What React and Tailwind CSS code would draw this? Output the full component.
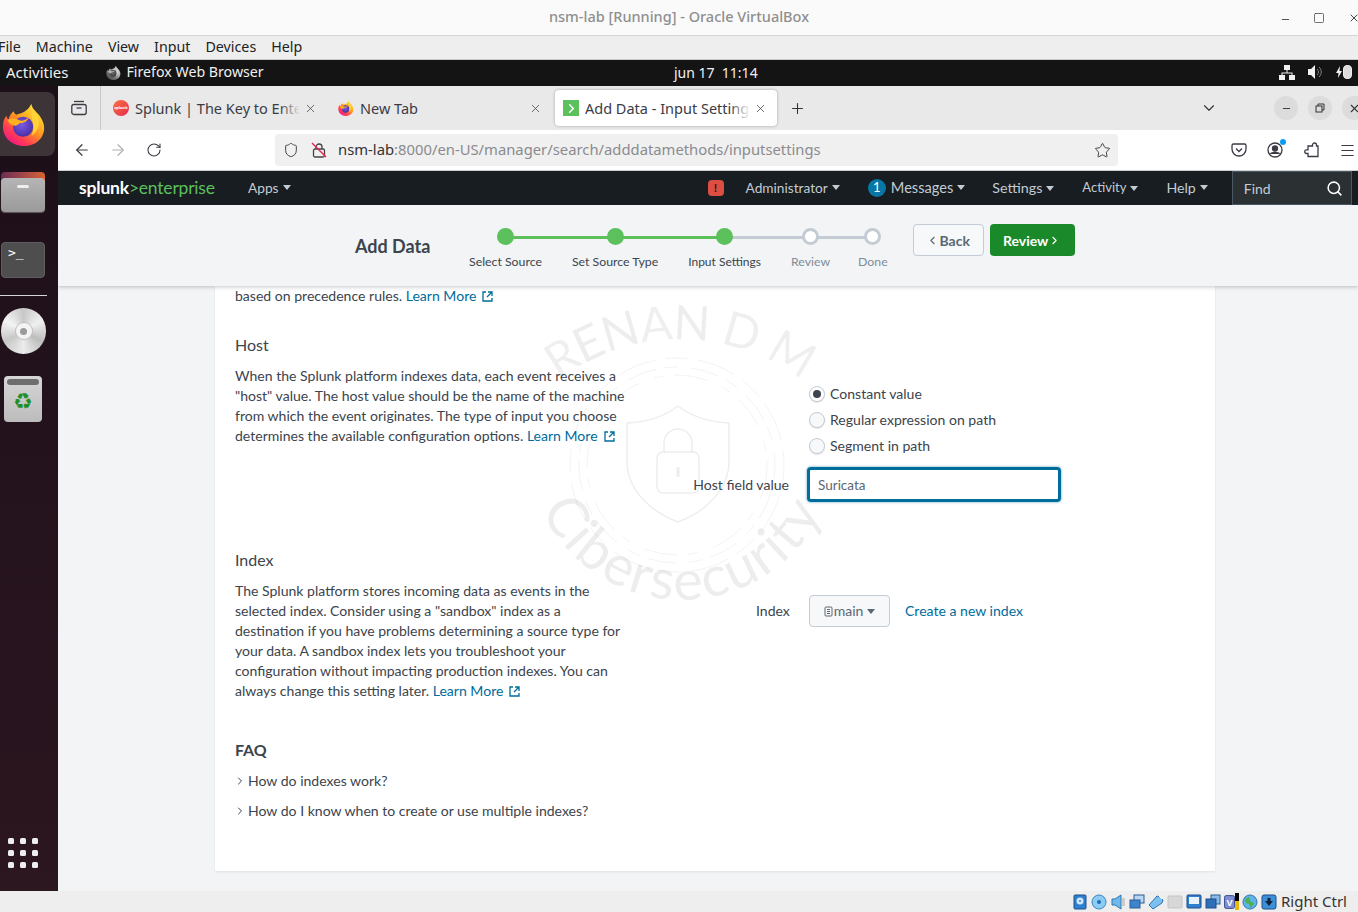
import { ChevronDown, ChevronRight, ChevronLeft, X, Plus, ArrowLeft, ArrowRight, RotateCw, Star, Search, Menu, Minus, Square, Shield } from "lucide-react";

const Caret = ({ className = "" }) => (
  <svg width="8" height="5" viewBox="0 0 8 5" className={className}>
    <path d="M0 0h8L4 5z" fill="currentColor" />
  </svg>
);

const FirefoxLogo = ({ id, size = 16 }) => (
  <svg width={size} height={size} viewBox="0 0 48 48">
    <defs>
      <linearGradient id={`${id}a`} x1="0.8" y1="0.1" x2="0.15" y2="0.95">
        <stop offset="0" stopColor="#ffe033" />
        <stop offset="0.4" stopColor="#ff9a1f" />
        <stop offset="0.75" stopColor="#ff3a55" />
        <stop offset="1" stopColor="#f0148c" />
      </linearGradient>
      <radialGradient id={`${id}b`} cx="0.45" cy="0.4" r="0.6">
        <stop offset="0" stopColor="#7a5be0" />
        <stop offset="1" stopColor="#4a2fa8" />
      </radialGradient>
    </defs>
    <path d="M32 2c1 6 5 8 9 13 3 4 5 9 5 13 0 12-10 20-22 20C11 48 1 39 1 27c0-5 1-9 4-12 0 2 1 3 2 4 1-4 3-7 6-9 0 2 1 3 3 4 5-2 12-3 16-12z" fill={`url(#${id}a)`} />
    <circle cx="23" cy="27" r="11" fill={`url(#${id}b)`} />
    <path d="M6 20c4-3 9-2 13 0 3 1 7 0 10-3-1 4-5 6-9 6-1 0-2 2-5 3-3 0-7-2-9-6z" fill="#ffb01f" />
    <path d="M33 8c5 3 8 10 7 17-1 6-5 10-8 12 3-6 3-12 1-17-1-4-1-8 0-12z" fill="#ffd23a" />
  </svg>
);

const WinFrameButton = ({ children }) => (
  <div className="flex h-6 w-6 shrink-0 items-center justify-center rounded-full bg-[#dcdcdc] text-[#333]">{children}</div>
);

const Tab = ({ icon, title, active, width, fade }) => (
  <div className={`flex h-9 shrink-0 items-center rounded pl-2 ${width} ${active ? "bg-white pr-[10px] shadow-[0_0_3px_rgba(0,0,0,0.3)]" : "pr-[12px]"}`}>
    <div className="flex h-4 w-4 shrink-0 items-center justify-center">{icon}</div>
    <div className="relative ml-[6px] min-w-0 flex-1 overflow-hidden whitespace-nowrap pt-px text-[14.5px] text-[#3b3b45]">
      {title}
      {fade && <div className={`absolute inset-y-0 right-0 w-5 bg-gradient-to-r from-transparent ${active ? "to-white" : "to-[#e9e9e9]"}`} />}
    </div>
    <X size={13} className="ml-1 shrink-0 text-[#444]" strokeWidth={1.4} />
  </div>
);

const NavItem = ({ children, size = "text-[13.7px]", className = "" }) => (
  <div className={`flex shrink-0 items-center gap-[4px] text-[#c3cbd4] ${size} ${className}`}>
    {children}
    <Caret />
  </div>
);

const Step = ({ label, done, lineWidth, lineDone, labelSize = "text-[12.3px]", className = "" }) => (
  <div className={`relative flex flex-col items-center ${className}`}>
    {lineWidth && (
      <div className={`absolute left-1/2 top-[11px] h-[3px] ${lineWidth} ${lineDone ? "bg-[#5cc05c]" : "bg-[#c3cbd4]"}`} />
    )}
    <div className={`relative mt-[3px] h-[17px] w-[17px] rounded-full ${done ? "bg-[#5cc05c]" : "border-[3px] border-[#c3cbd4] bg-white"}`} />
    <div className={`mt-[8px] whitespace-nowrap ${labelSize} ${done ? "text-[#3c444d]" : "text-[#818d99]"}`}>{label}</div>
  </div>
);

const Learn = () => (
  <a className="text-[#006d9c]">
    Learn More
    <svg width="11" height="11" viewBox="0 0 11 11" fill="none" stroke="#006d9c" strokeWidth="1.3" className="ml-[6px] inline-block -translate-y-[1px]">
      <path d="M4 1H1v9h9V7" />
      <path d="M6 1h4v4M10 1L5 6" />
    </svg>
  </a>
);

const Radio = ({ label, checked }) => (
  <div className="flex h-[26px] items-center">
    <div className={`flex h-4 w-4 items-center justify-center rounded-full border border-[#c3cbd4] ${checked ? "bg-white" : "bg-[#f7f8fa]"} shadow-[0_1px_1px_rgba(0,0,0,0.1)]`}>
      {checked && <div className="h-2 w-2 rounded-full bg-[#3c444d]" />}
    </div>
    <span className="ml-[5px] text-[#3c444d]">{label}</span>
  </div>
);

const Watermark = () => (
  <svg className="pointer-events-none absolute left-[300px] top-[10px]" width="340" height="340" viewBox="515 296 340 340" fill="none">
    <defs>
      <path id="wmTop" d="M 545 391 A 203 203 0 0 1 815 391" />
      <path id="wmBottom" d="M 527 445 A 155 155 0 0 0 837 445" />
    </defs>
    <text fill="#000" fillOpacity="0.07" fontFamily="Lato, sans-serif" fontSize="48" letterSpacing="-1">
      <textPath href="#wmTop" startOffset="50%" textAnchor="middle">RENAN D M</textPath>
    </text>
    <text fill="#000" fillOpacity="0.07" fontFamily="Lato, sans-serif" fontSize="56" letterSpacing="2">
      <textPath href="#wmBottom" startOffset="50%" textAnchor="middle">Cibersecurity</textPath>
    </text>
    <g stroke="#000" strokeOpacity="0.05" strokeWidth="1">
      <circle cx="677" cy="465" r="107" strokeDasharray="24 8 40 10" />
      <circle cx="677" cy="465" r="98" strokeDasharray="14 12 30 8" />
      <circle cx="677" cy="465" r="90" strokeDasharray="34 16 10 10" />
    </g>
    <g stroke="#000" strokeOpacity="0.07" strokeWidth="1.5">
      <path d="M678 406c-14 11-32 16-51 17v38c0 28 22 50 51 61 29-11 51-33 51-61v-38c-19-1-37-6-51-17z" />
      <rect x="657" y="452" width="42" height="41" rx="6" />
      <path d="M664 452v-9a14 14 0 0 1 28 0v9" />
      <path d="M678 467v10" strokeWidth="3" />
    </g>
  </svg>
);

const StatusIcon = ({ children }) => (
  <svg width="16" height="16" viewBox="0 0 16 16" className="shrink-0">{children}</svg>
);

const StatusBar = () => (
  <div className="flex h-[21px] shrink-0 items-center justify-end gap-[3px] bg-[#eeeeee] pr-[11px]">
    <StatusIcon><rect x="2" y="1" width="12" height="14" rx="1" fill="#2f7fd0" stroke="#1c4f8a" /><circle cx="8" cy="7" r="3.500" fill="#cfe6fb" /><circle cx="8" cy="7" r="1" fill="#2f7fd0" /></StatusIcon>
    <StatusIcon><circle cx="8" cy="8" r="7" fill="#8ccbf2" stroke="#3a86c4" /><circle cx="8" cy="8" r="2" fill="#1e6fb3" /></StatusIcon>
    <StatusIcon><path d="M5 5l6-4v14l-6-4H2V5z" fill="#6fb8ea" stroke="#2f78b5" /><path d="M12 4h3v8h-3z" fill="#cccccc" /></StatusIcon>
    <StatusIcon><rect x="5" y="1" width="10" height="8" fill="#b9d7f2" stroke="#2c5d91" /><rect x="1" y="6" width="10" height="8" fill="#3c84cc" stroke="#2c5d91" /></StatusIcon>
    <StatusIcon><path d="M1 11l8-9 3 1 3 3-1 3-9 6z" fill="#7cc0f0" stroke="#2f78b5" /><path d="M11 2l3 3" stroke="#fff" /></StatusIcon>
    <StatusIcon><rect x="1" y="2" width="14" height="12" rx="1" fill="#d7d7d7" stroke="#c4c4c4" /></StatusIcon>
    <StatusIcon><rect x="1" y="1" width="14" height="13" rx="1" fill="#2f7fd0" stroke="#1c4f8a" /><rect x="3" y="3" width="10" height="7" fill="#e6f2fc" /></StatusIcon>
    <StatusIcon><rect x="6" y="1" width="9" height="9" fill="#8bbce8" stroke="#2c5d91" /><rect x="1" y="5" width="10" height="9" fill="#2f6fb8" stroke="#1c4f8a" /></StatusIcon>
    <div className="flex items-center">
      <svg width="11" height="16" viewBox="2 0 12 16"><rect x="2.500" y="1" width="11" height="14" rx="2" fill="#7d8fd4" stroke="#33418c" /><text x="8" y="12" textAnchor="middle" fontSize="10" fontWeight="700" fill="#fff" fontFamily="Liberation Sans, sans-serif">V</text></svg>
      <div className="flex h-[17px] w-[4px] flex-col justify-end bg-black"><div className="h-[9px] bg-[#e8b90c]" /></div>
    </div>
    <StatusIcon><circle cx="8" cy="8" r="7" fill="#5fb3e6" stroke="#2f78b5" /><path d="M3 5l4-2 1 4 4 2-3 5-2-4-3-1z" fill="#4caf50" /></StatusIcon>
    <StatusIcon><rect x="1" y="1" width="14" height="14" rx="2" fill="#3d8fd8" stroke="#1c4f8a" /><path d="M8 12L4 7h2.500V4h3v3H12z" fill="#12233d" /></StatusIcon>
    <span className="ml-[1px] text-[15px] text-[#333] [font-family:'Noto_Sans',sans-serif]">Right Ctrl</span>
  </div>
);

const Dock = () => (
  <div className="flex w-[58px] shrink-0 flex-col bg-gradient-to-b from-[#1c0f18] to-[#2c1620]">
    <div className="mt-[6px] flex h-[64px] w-[55px] items-center justify-center rounded-r-lg bg-[#3d3438] pr-[8px]">
      <FirefoxLogo id="dock" size={44} />
    </div>
    <div className="relative ml-[1px] mt-[16px] h-10 w-[44px]">
      <div className="h-[14px] w-[44px] rounded-t bg-gradient-to-r from-[#6d2b52] to-[#d9622b]" />
      <div className="absolute bottom-0 left-0 flex h-[34px] w-[44px] justify-center rounded bg-gradient-to-b from-[#b5b5b5] to-[#9a9a9a] pt-[7px] shadow-[0_1px_1px_rgba(255,255,255,0.3)]">
        <div className="h-[3px] w-3 rounded-sm bg-[#eeeeee]" />
      </div>
    </div>
    <div className="ml-[1px] mt-[30px] h-9 w-[44px] rounded border border-[#5e5e5e] bg-[#4e4e4e] pl-[6px] pt-[3px] text-[13px] leading-none text-white [font-family:'DejaVu_Sans_Mono',monospace]">
      &gt;_
    </div>
    <div className="mt-[17px] h-px w-[47px] bg-[#d8d4d6]" />
    <div className="relative ml-[1px] mt-[12px] flex h-[46px] w-[45px] items-center justify-center rounded-full bg-[conic-gradient(#c8c8c8,#f0f0f0,#bdbdbd,#ececec,#c8c8c8,#f4f4f4,#c8c8c8)]">
      <div className="flex h-4 w-4 items-center justify-center rounded-full bg-[#f4f4f4] shadow-[0_0_0_1px_#c0c0c0]">
        <div className="h-[7px] w-[7px] rounded-full bg-[#9a9a9a]" />
      </div>
    </div>
    <div className="ml-[4px] mt-[22px] flex h-[46px] w-[38px] flex-col items-center rounded bg-gradient-to-b from-[#d6d6d6] to-[#bcbcbc] pt-[3px]">
      <div className="h-[6px] w-[32px] rounded-sm bg-[#6e6e6e]" />
      <span className="mt-[2px] text-[22px] leading-[30px] text-[#1f8f2c] [font-family:'DejaVu_Sans',sans-serif]">♻</span>
    </div>
    <div className="mb-[23px] ml-[8px] mt-auto grid w-[30px] grid-cols-3 gap-[6px]">
      {Array.from({ length: 9 }).map((_, i) => (
        <div key={i} className="h-[6px] w-[6px] rounded-[1.500px] bg-[#eeeeee]" />
      ))}
    </div>
  </div>
);

const TabStrip = () => (
  <div className="flex h-11 shrink-0 items-center bg-[#e9e9e9]">
    <div className="flex h-full w-[43px] shrink-0 items-center justify-center border-r border-[#c9c9c9]">
      <svg width="16" height="16" viewBox="0 0 16 16" fill="none" stroke="#3b3b45" strokeWidth="1.3">
        <path d="M3 1.500h10" />
        <rect x="0.800" y="4.500" width="14.400" height="10" rx="2" />
        <path d="M5.500 8h5" />
      </svg>
    </div>
    <div className="ml-[4px] flex w-[225px] shrink-0 items-center">
      <Tab
        width="w-[224px]"
        fade
        title="Splunk | The Key to Enterprise"
        icon={
          <div className="flex h-4 w-4 items-center justify-center overflow-hidden rounded-full bg-gradient-to-br from-[#f9703e] to-[#e5214f] text-[4px] font-bold leading-none text-white">
            splunk
          </div>
        }
      />
    </div>
    <Tab width="w-[224px]" title="New Tab" icon={<FirefoxLogo id="tab" size={16} />} />
    <div className="ml-[1px] shrink-0">
      <Tab
        active
        fade
        width="w-[222px]"
        title="Add Data - Input Settings | Splunk"
        icon={
          <div className="flex h-4 w-4 items-center justify-center bg-[#5cc05c]">
            <ChevronRight size={15} strokeWidth={2.400} className="text-white" />
          </div>
        }
      />
    </div>
    <Plus size={17} className="ml-[12px] shrink-0 text-[#333]" strokeWidth={1.500} />
    <ChevronDown size={18} className="ml-[394px] shrink-0 text-[#333]" strokeWidth={1.500} />
    <div className="ml-[56px] flex shrink-0 gap-[10px]">
      <WinFrameButton><Minus size={11} /></WinFrameButton>
      <WinFrameButton>
        <svg width="10" height="10" viewBox="0 0 10 10" fill="none" stroke="#333"><rect x="1" y="3" width="6" height="6" /><path d="M3 3V1h6v6H7" /></svg>
      </WinFrameButton>
      <WinFrameButton><X size={13} /></WinFrameButton>
    </div>
  </div>
);

const Toolbar = () => (
  <div className="flex h-[41px] shrink-0 items-center border-b border-[#cfcfcf] bg-white">
    <ArrowLeft size={18} className="ml-[15px] text-[#3b3b45]" strokeWidth={1.600} />
    <ArrowRight size={18} className="ml-[18px] text-[#b0b0b5]" strokeWidth={1.600} />
    <RotateCw size={16} className="ml-[19px] text-[#3b3b45]" strokeWidth={1.600} />
    <div className="ml-[113px] flex h-8 w-[843px] items-center rounded bg-[#f0f0f0]">
      <Shield size={16} className="ml-2 text-[#444]" strokeWidth={1.500} />
      <div className="relative ml-3 h-4 w-4">
        <svg width="16" height="16" viewBox="0 0 16 16" fill="none">
          <rect x="2.500" y="7" width="11" height="8" rx="1.500" stroke="#444" strokeWidth="1.300" />
          <path d="M5 7V5a3 3 0 0 1 6 0v2" stroke="#444" strokeWidth="1.300" />
          <path d="M1 1l14 14" stroke="#e22850" strokeWidth="1.400" />
        </svg>
      </div>
      <div className="ml-[11px] flex-1 whitespace-nowrap pb-px text-[14.800px] text-[#8b8b8f]">
        <span className="text-[#333]">nsm-lab</span>:8000/en-US/manager/search/adddatamethods/inputsettings
      </div>
      <Star size={17} className="mr-[7px] text-[#444]" strokeWidth={1.400} />
    </div>
    <svg className="ml-[113px]" width="16" height="16" viewBox="0 0 16 16" fill="none" stroke="#3b3b45" strokeWidth="1.300">
      <path d="M2.500 2h11A1.500 1.500 0 0 1 15 3.500V7a7 7 0 0 1-14 0V3.500A1.500 1.500 0 0 1 2.500 2z" />
      <path d="M5 6.500l3 3 3-3" />
    </svg>
    <div className="relative ml-[20px] h-4 w-4">
      <svg width="16" height="16" viewBox="0 0 16 16" fill="none" stroke="#3b3b45" strokeWidth="1.300">
        <circle cx="8" cy="8" r="7" />
        <circle cx="8" cy="6.500" r="2.500" fill="#3b3b45" />
        <path d="M3.500 12c1-2 8-2 9 0" fill="#3b3b45" />
      </svg>
      <div className="absolute -right-[3px] -top-[3px] h-[6px] w-[6px] rounded-full bg-[#0a9cf5]" />
    </div>
    <svg className="ml-[20px]" width="16" height="16" viewBox="0 0 16 16" fill="none" stroke="#3b3b45" strokeWidth="1.300">
      <path d="M7 4h2.500V3a2 2 0 0 1 4 0v1H15v10.500H5V11.500H3.500a1.800 1.800 0 0 1 0-3.600H5V4z" />
    </svg>
    <Menu size={17} className="ml-[20px] text-[#3b3b45]" strokeWidth={1.500} />
  </div>
);

const SplunkNav = () => (
  <div className="flex h-[34px] shrink-0 items-center bg-[#171d21]">
    <div className="ml-[21px] flex w-[169px] shrink-0 items-baseline text-[17.500px] leading-none tracking-[-0.2px]">
      <span className="font-bold text-white">splunk</span>
      <span className="text-[#5cc05c]">&gt;enterprise</span>
    </div>
    <NavItem>Apps</NavItem>
    <div className="ml-[417px] flex h-4 w-4 shrink-0 items-center justify-center rounded-sm bg-[#dc4e41] text-[12px] font-bold leading-none text-[#171d21]">!</div>
    <NavItem className="ml-[22px]">Administrator</NavItem>
    <div className="ml-[28px] flex h-[18px] w-[18px] shrink-0 items-center justify-center rounded-full bg-[#0877a6] text-[13px] text-white">1</div>
    <NavItem size="text-[14.600px]" className="ml-[5px]">Messages</NavItem>
    <NavItem size="text-[14.300px]" className="ml-[27px]">Settings</NavItem>
    <NavItem size="text-[13px]" className="ml-[28px]">Activity</NavItem>
    <NavItem size="text-[14.200px]" className="ml-[28px]">Help</NavItem>
    <div className="ml-[24px] flex h-[34px] w-[120px] shrink-0 items-center justify-between border border-[#4a5866] bg-[#2b3033] pl-[11px] pr-[8px] text-[14px] text-[#c3cbd4]">
      Find
      <Search size={17} className="text-white" strokeWidth={2.200} />
    </div>
  </div>
);

const AddDataHeader = () => (
  <div className="relative z-10 flex h-[81px] shrink-0 bg-[#f2f4f5] shadow-[0_1px_4px_rgba(60,70,85,0.3)]">
    <div className="ml-[297px] w-[114px] pt-[29px] text-[18px] font-bold leading-6 text-[#3c444d]">Add Data</div>
    <div className="flex gap-[30px] pt-[20px]">
      <Step done label="Select Source" lineWidth="w-[110px]" lineDone />
      <Step done label="Set Source Type" lineWidth="w-[109px]" lineDone />
      <Step done label="Input Settings" lineWidth="w-[86px]" labelSize="text-[12px]" />
      <Step label="Review" lineWidth="w-[63px]" className="-mr-[2px]" />
      <Step label="Done" />
    </div>
    <div className="ml-[25px] flex gap-[6px] pt-[19px]">
      <div className="flex h-8 w-[71px] items-center justify-center rounded-sm border border-[#c3cbd4] bg-[#f7f8fa] text-[14px] font-bold text-[#5c6773]">
        <ChevronLeft size={13} strokeWidth={2} />Back
      </div>
      <div className="flex h-8 w-[85px] items-center justify-center rounded-sm bg-[#1a8929] text-[14px] font-bold text-white">
        Review<ChevronRight size={13} strokeWidth={2} />
      </div>
    </div>
  </div>
);

const Panel = () => (
  <div className="relative ml-[157px] h-[585px] w-[1000px] shrink-0 bg-white pl-5 text-[14.050px] leading-5 text-[#3c444d] shadow-[0_1px_2px_rgba(60,70,85,0.1)]">
    <p>based on precedence rules. <Learn /></p>

    <h3 className="mt-[28px] text-[16px] leading-[22px]">Host</h3>
    <div className="mt-[10px] flex">
      <p className="w-[395px]">
        When the Splunk platform indexes data, each event receives a "host" value. The host value should be the name of the machine from which the event originates. The type of input you choose determines the available configuration options. <Learn />
      </p>
      <div className="ml-[60px] pt-[15px]">
        <div className="ml-[119px]">
          <Radio checked label="Constant value" />
          <Radio label="Regular expression on path" />
          <Radio label="Segment in path" />
        </div>
        <div className="mt-[8px] flex items-center">
          <div className="w-[99px] whitespace-nowrap text-right">Host field value</div>
          <div className="ml-[18px] flex h-[35px] w-[254px] items-center rounded-[4px] border-[3px] border-[#006d9c] bg-white pl-2 text-[13.500px] text-[#5c6773] shadow-[0_0_2px_1px_rgba(0,109,156,0.3)]">Suricata</div>
        </div>
      </div>
    </div>

    <h3 className="mt-[47px] text-[16px] leading-[22px]">Index</h3>
    <div className="mt-[10px] flex">
      <p className="w-[395px]">
        The Splunk platform stores incoming data as events in the selected index. Consider using a "sandbox" index as a destination if you have problems determining a source type for your data. A sandbox index lets you troubleshoot your configuration without impacting production indexes. You can always change this setting later. <Learn />
      </p>
      <div className="ml-[126px] mt-[14px] flex h-8 items-center">
        <span className="w-[33px]">Index</span>
        <div className="ml-5 flex h-8 w-[81px] items-center justify-center gap-1 rounded-sm border border-[#c3cbd4] bg-[#f7f8fa] text-[#5c6773]">
          <span className="flex items-center">
            <svg width="9" height="11" viewBox="0 0 9 11" fill="none" stroke="#5c6773"><rect x="1" y="1" width="7" height="9" rx="1" /><path d="M3 3.500h3M3 5.500h3M3 7.500h3" /></svg>
            <span className="ml-[1px]">main</span>
          </span>
          <Caret />
        </div>
        <a className="ml-[15px] whitespace-nowrap text-[#006d9c]">Create a new index</a>
      </div>
    </div>

    <h3 className="mt-[38px] text-[16px] font-bold leading-[22px]">FAQ</h3>
    <div className="mt-[10px] flex items-center gap-[2px]"><ChevronRight size={12} strokeWidth={2} className="-ml-[1px]" /> How do indexes work?</div>
    <div className="mt-[10px] flex items-center gap-[2px]"><ChevronRight size={12} strokeWidth={2} className="-ml-[1px]" /> How do I know when to create or use multiple indexes?</div>

    <Watermark />
  </div>
);

const App = () => (
  <div className="flex h-[912px] w-[1358px] flex-col overflow-hidden bg-white [font-family:'Lato',sans-serif]">
    <div className="relative flex h-9 shrink-0 items-center justify-center border-b border-[#d6d6d6] bg-[#fafafa] pb-[2px] text-[14.500px] font-medium text-[#8f8f8f] [font-family:'Noto_Sans',sans-serif]">
      nsm-lab [Running] - Oracle VirtualBox
      <div className="absolute right-0 top-0 flex h-[35px] items-center text-[#444]">
        <Minus size={11} className="translate-y-[2px]" />
        <Square size={12} className="ml-[22px]" strokeWidth={1.500} />
        <X size={12} className="-mr-[2px] ml-[23px]" />
      </div>
    </div>
    <div className="flex h-[23px] shrink-0 items-center gap-[15px] bg-[#eeeeee] pb-[2px] text-[14.250px] text-[#222] [font-family:'Noto_Sans',sans-serif]">
      <span className="-ml-[2px]">File</span><span>Machine</span><span>View</span><span>Input</span><span>Devices</span><span>Help</span>
    </div>
    <div className="relative flex h-[27px] shrink-0 items-center border-t border-[#c8c8c8] bg-[#141414] pb-[2px] text-[14.200px] text-[#f0f0f0] [font-family:'Noto_Sans',sans-serif]">
      <span className="ml-[6px] text-[15px]">Activities</span>
      <span className="ml-[37px] grayscale"><FirefoxLogo id="top" size={15} /></span>
      <span className="ml-[6px]">Firefox Web Browser</span>
      <span className="absolute left-[674px] text-[14px]">jun 17&nbsp;&nbsp;11:14</span>
      <div className="absolute right-[6px] flex items-center gap-[13px]">
        <svg width="16" height="15" viewBox="0 0 16 15" fill="#f0f0f0"><rect x="5" y="0" width="6" height="5" /><rect x="0" y="10" width="6" height="5" /><rect x="10" y="10" width="6" height="5" /><path d="M7.500 5h1v2.500H13.500V10h-1V8.500h-9V10h-1V7.500h5z" /></svg>
        <svg width="15" height="14" viewBox="0 0 15 14" fill="#f0f0f0"><path d="M0 4h3l4-4v14l-4-4H0z" /><path d="M9 4c2 2 2 4 0 6M11 2c3 3 3 7 0 10" stroke="#888" fill="none" /></svg>
        <div className="flex items-center">
          <svg width="6" height="12" viewBox="0 0 6 12" fill="#f0f0f0"><path d="M4 0L0 7h2.500L2 12l4-7H3.500z" /></svg>
          <div className="ml-[1px] h-[14px] w-[9px] rounded-sm border border-[#f0f0f0] bg-[#dddddd]" />
        </div>
      </div>
    </div>
    <div className="flex min-h-0 flex-1">
      <Dock />
      <div className="flex min-w-0 flex-1 flex-col overflow-hidden [font-family:'Noto_Sans',sans-serif]">
        <TabStrip />
        <Toolbar />
        <div className="flex min-h-0 flex-1 flex-col bg-[#f2f4f5] [font-family:'Lato',sans-serif]">
          <SplunkNav />
          <AddDataHeader />
          <Panel />
        </div>
      </div>
    </div>
    <StatusBar />
  </div>
);

export default App;
